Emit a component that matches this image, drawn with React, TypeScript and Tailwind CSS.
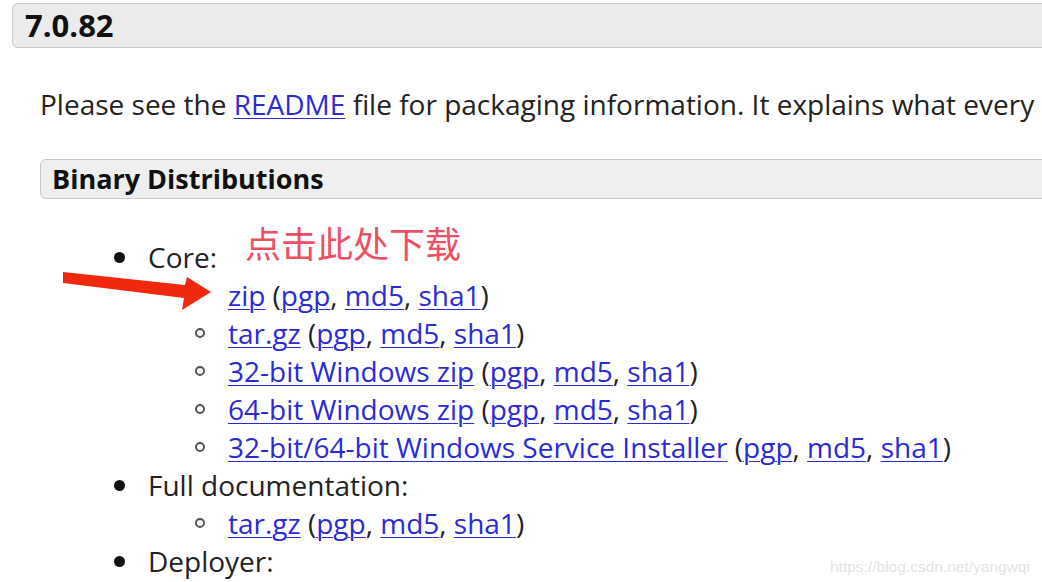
import React from "react";

const font = { fontFamily: '"Open Sans", "Noto Sans", sans-serif' };

function A({ children }: { children: React.ReactNode }) {
  return <a className="text-[#2b2bd6] underline underline-offset-[3px] decoration-1">{children}</a>;
}

function Sigs() {
  return (
    <>
      {" ("}
      <A>pgp</A>, <A>md5</A>, <A>sha1</A>)
    </>
  );
}

function Disc({ children }: { children: React.ReactNode }) {
  return (
    <div className="flex items-center h-[38px]">
      <span className="w-[11px] h-[11px] rounded-full bg-[#111] ml-[114px] mr-[23px]" />
      <span>{children}</span>
    </div>
  );
}

// covered = bullet hidden under the red arrow in the screenshot
function Circle({ children, covered }: { children: React.ReactNode; covered?: boolean }) {
  return (
    <div className="flex items-center h-[38px]">
      <span
        className={
          covered
            ? "w-[10px] h-[10px] ml-[195px] mr-[23px]"
            : "w-[10px] h-[10px] rounded-full border-2 border-[#555] ml-[195px] mr-[23px]"
        }
      />
      <span>{children}</span>
    </div>
  );
}

export default function App() {
  return (
    <div className="relative w-[1042px] h-[582px] overflow-hidden bg-white text-[#222] whitespace-nowrap" style={font}>
      {/* version header */}
      <div className="ml-[12px] mt-[3px] h-[45px] flex items-center pl-[12px] bg-[#ebebeb] border border-[#c9c9c9] rounded-l-[6px] -mr-[20px]">
        <span className="text-[31px] font-bold text-[#111]">7.0.82</span>
      </div>

      <p className="ml-[40px] mt-[37px] text-[28px] leading-[38px]">
        Please see the <A>README</A> file for packaging information. It explains what every
      </p>

      {/* section header */}
      <div className="ml-[40px] mt-[36px] h-[40px] flex items-center pl-[11px] bg-[#efefef] border border-[#c9c9c9] rounded-l-[6px] -mr-[20px]">
        <span className="text-[27px] font-bold text-[#111]">Binary Distributions</span>
      </div>

      <div className="mt-[39px] text-[28px]">
        <Disc>Core:</Disc>
        <Circle covered>
          <A>zip</A>
          <Sigs />
        </Circle>
        <Circle>
          <A>tar.gz</A>
          <Sigs />
        </Circle>
        <Circle>
          <A>32-bit Windows zip</A>
          <Sigs />
        </Circle>
        <Circle>
          <A>64-bit Windows zip</A>
          <Sigs />
        </Circle>
        <Circle>
          <A>32-bit/64-bit Windows Service Installer</A>
          <Sigs />
        </Circle>
        <Disc>Full documentation:</Disc>
        <Circle>
          <A>tar.gz</A>
          <Sigs />
        </Circle>
        <Disc>Deployer:</Disc>
      </div>

      {/* red annotation */}
      <div
        className="absolute left-[245px] top-[220px] text-[36px] leading-[44px] text-[#ee4f62]"
        style={{ fontFamily: '"Noto Sans CJK SC", sans-serif' }}
      >
        点击此处下载
      </div>
      <svg className="absolute left-0 top-0" width="260" height="330" viewBox="0 0 260 330">
        <polygon points="63,272 185,285 187,277 211,292 182,310 184,298 63,283" fill="#f0280e" />
      </svg>

      {/* watermark */}
      <div className="absolute left-[830px] top-[555px] text-[15.5px] text-[#e4e4e4]" style={{ fontFamily: '"Liberation Sans", sans-serif' }}>
        https://blog.csdn.net/yangwqi
      </div>
    </div>
  );
}
